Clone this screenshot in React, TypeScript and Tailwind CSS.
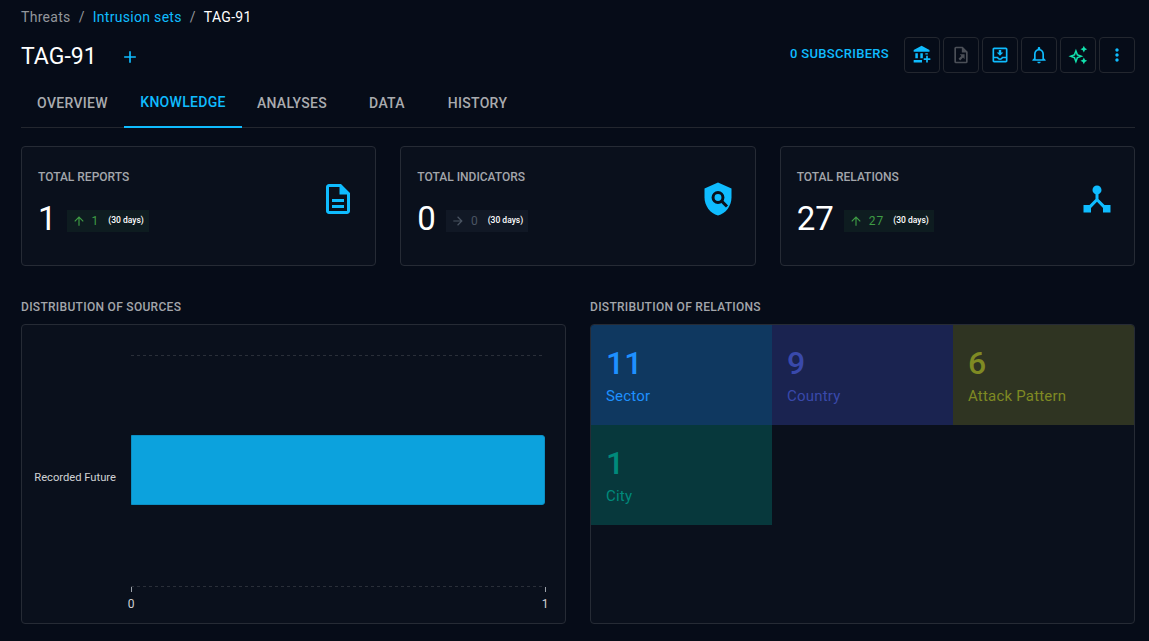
// Intrusion set knowledge page: header, tabs, metric cards and two distribution panels.
import type { ReactNode } from "react";
import {
  MdAdd,
  MdArrowForward,
  MdArrowUpward,
  MdDeviceHub,
  MdMoreVert,
  MdOutlineDescription,
  MdOutlineMoveToInbox,
  MdOutlineNotifications,
} from "react-icons/md";

const font = { fontFamily: "Roboto, 'Noto Sans', sans-serif" };

function BankPlusIcon() {
  return (
    <svg viewBox="0 0 24 24" className="h-5 w-5" fill="currentColor">
      <path d="M17 13h2v3h3v2h-3v3h-2v-3h-3v-2h3zM11.5 1 2 6v2h19V6zM4 10v6h3v-6zM10 10v6h3v-6zM16 10v1.5h3V10zM2 18v3h10.2a6 6 0 0 1-.2-1.5c0-.5.05-1 .15-1.5z" />
    </svg>
  );
}

function FileExportIcon() {
  return (
    <svg viewBox="0 0 24 24" className="h-5 w-5" fill="currentColor">
      <path d="M6 2a2 2 0 0 0-2 2v16a2 2 0 0 0 2 2h12a2 2 0 0 0 2-2V8l-6-6zm0 2h7v5h5v11H6zm3 12.5 3.4-3.4-1.9-1.9h5.8V17l-1.9-1.9-3.4 3.4z" />
    </svg>
  );
}

function StarsIcon() {
  return (
    <svg viewBox="0 0 24 24" className="h-5 w-5" fill="currentColor">
      <path
        fillRule="evenodd"
        d="M9.5 4.5 12 11l6.5 2.5L12 16l-2.5 6.5L7 16l-6.5-2.5L7 11zm0 5L8.5 12.5l-3 1 3 1 1 3 1-3 3-1-3-1z"
      />
      <path d="m19 1 1.3 2.7L23 5l-2.7 1.3L19 9l-1.3-2.7L15 5l2.7-1.3zM19 15l1.3 2.7L23 19l-2.7 1.3L19 23l-1.3-2.7L15 19l2.7-1.3z" />
    </svg>
  );
}

function ShieldSearchIcon() {
  return (
    <svg viewBox="0 0 24 24" className="h-9 w-9">
      <path fill="#0fbcff" d="M12 1 3 5v6c0 5.55 3.84 10.74 9 12 5.16-1.26 9-6.45 9-12V5z" />
      <circle cx="12" cy="11" r="3.3" fill="none" stroke="#0a101c" strokeWidth="2" />
      <path d="m14.6 13.6 3.4 3.4" stroke="#0a101c" strokeWidth="2" />
    </svg>
  );
}

function ActionButton({ className, children }: { className: string; children: ReactNode }) {
  return (
    <div
      className={`flex h-9 w-9 items-center justify-center rounded border border-[#23272f] ${className}`}
    >
      {children}
    </div>
  );
}

function MetricCard({
  title,
  value,
  delta,
  up,
  icon,
}: {
  title: string;
  value: string;
  delta: string;
  up: boolean;
  icon: ReactNode;
}) {
  return (
    <div className="flex h-[120px] flex-1 items-start justify-between rounded border border-[#262b35] bg-[#0a101c] pl-4 pr-[19px] pt-[23px]">
      <div>
        <div className="text-xs font-medium leading-[14px] text-[#a3a6ab]">{title}</div>
        <div className="mt-4 flex items-center gap-[10px]">
          <span className="text-[33px] leading-[38px] text-white">{value}</span>
          <span
            className={`mt-[3px] flex h-[22px] items-center pl-[5px] pr-[5px] ${
              up ? "bg-[#0e1c20] text-[#3f9d45]" : "bg-[#111825] text-[#4b5563]"
            }`}
          >
            {up ? <MdArrowUpward size={14} /> : <MdArrowForward size={14} />}
            <span className="ml-[6px] mr-[9px] text-xs tracking-[1px]">{delta}</span>
            <span className="text-[8.5px] font-medium text-white">(30 days)</span>
          </span>
        </div>
      </div>
      <div className="mt-[11px] text-[#0fbcff]">{icon}</div>
    </div>
  );
}

const tabs = [
  { label: "OVERVIEW", width: "w-[103px]" },
  { label: "KNOWLEDGE", width: "w-[118px]", active: true },
  { label: "ANALYSES", width: "w-[100px]" },
  { label: "DATA", width: "w-[90px]" },
  { label: "HISTORY", width: "w-[91px]" },
];

const treemap = [
  { n: "11", label: "Sector", bg: "bg-[#0f3860]", fg: "text-[#1e90ff]" },
  { n: "9", label: "Country", bg: "bg-[#1a2350]", fg: "text-[#3949ab]" },
  { n: "6", label: "Attack Pattern", bg: "bg-[#2f3422]", fg: "text-[#7f8a23]" },
  { n: "1", label: "City", bg: "bg-[#07383c]", fg: "text-[#00897b]" },
];

function SourcesChart() {
  return (
    <svg viewBox="0 0 543 298" className="block h-full w-full">
      <path d="M109 30.5H523M109 261.5H523" stroke="#2a2f39" strokeDasharray="3 3" />
      <path d="M109.5 262V267M523.5 262V267" stroke="#9aa0a8" />
      <path
        d="M109.5 110.5H520a2.5 2.5 0 0 1 2.5 2.5v64a2.5 2.5 0 0 1-2.5 2.5H109.5z"
        fill="#0ca2dd"
        stroke="#0b8fc4"
      />
      <text x="94" y="156" textAnchor="end" fontSize="11.2" fill="#d0d2d5">
        Recorded Future
      </text>
      <text x="109" y="283" textAnchor="middle" fontSize="12" fill="#d0d2d5">
        0
      </text>
      <text x="523" y="283" textAnchor="middle" fontSize="12" fill="#d0d2d5">
        1
      </text>
    </svg>
  );
}

export default function App() {
  return (
    <div
      className="h-[641px] overflow-hidden bg-[#060c18] pl-[21px] pr-[14px] pt-[9px]"
      style={font}
    >
      <div className="flex items-center text-sm leading-4 tracking-[0.3px] text-[#93969b]">
        <span>Threats</span>
        <span className="mx-[8px]">/</span>
        <span className="text-[#0fbcff]">Intrusion sets</span>
        <span className="mx-[8px]">/</span>
        <span className="text-white">TAG-91</span>
      </div>

      <div className="mt-[12px] flex h-9 items-center justify-between">
        <div className="mt-1 flex items-center">
          <h1 className="text-[23px] leading-7 text-white">TAG-91</h1>
          <MdAdd size={20} className="ml-[23px] text-[#0fbcff]" />
        </div>
        <div className="flex items-center">
          <span className="mr-[15px] mb-[3px] text-[13px] font-medium tracking-[0.3px] text-[#0fbcff]">
            0 SUBSCRIBERS
          </span>
          <div className="flex gap-[3px]">
            <ActionButton className="text-[#0fbcff]">
              <BankPlusIcon />
            </ActionButton>
            <ActionButton className="text-[#4b4f57]">
              <FileExportIcon />
            </ActionButton>
            <ActionButton className="text-[#0fbcff]">
              <MdOutlineMoveToInbox size={20} />
            </ActionButton>
            <ActionButton className="text-[#0fbcff]">
              <MdOutlineNotifications size={20} />
            </ActionButton>
            <ActionButton className="text-[#12e0ad]">
              <StarsIcon />
            </ActionButton>
            <ActionButton className="text-[#0fbcff]">
              <MdMoreVert size={20} />
            </ActionButton>
          </div>
        </div>
      </div>

      <div className="mt-[7px] flex h-[48px] border-b border-[#23272f]">
        {tabs.map((t) => (
          <div
            key={t.label}
            className={`flex items-center justify-center pb-[2px] text-sm font-medium tracking-[0.3px] ${t.width} ${
              t.active
                ? "-mb-px border-b-2 border-[#0fbcff] text-[#0fbcff]"
                : "text-[#a9abaf]"
            }`}
          >
            {t.label}
          </div>
        ))}
      </div>

      <div className="mt-[18px] flex gap-6">
        <MetricCard
          title="TOTAL REPORTS"
          value="1"
          delta="1"
          up
          icon={<MdOutlineDescription size={36} />}
        />
        <MetricCard
          title="TOTAL INDICATORS"
          value="0"
          delta="0"
          up={false}
          icon={<ShieldSearchIcon />}
        />
        <MetricCard
          title="TOTAL RELATIONS"
          value="27"
          delta="27"
          up
          icon={<MdDeviceHub size={36} />}
        />
      </div>

      <div className="mt-[34px] grid grid-cols-2 gap-6">
        <div>
          <h3 className="text-xs font-medium leading-[14px] tracking-[0.3px] text-[#a3a6ab]">
            DISTRIBUTION OF SOURCES
          </h3>
          <div className="mt-[10px] h-[300px] rounded border border-[#262b35] bg-[#0a101c]">
            <SourcesChart />
          </div>
        </div>
        <div>
          <h3 className="text-xs font-medium leading-[14px] tracking-[0.3px] text-[#a3a6ab]">
            DISTRIBUTION OF RELATIONS
          </h3>
          <div className="mt-[10px] h-[300px] overflow-hidden rounded border border-[#262b35] bg-[#0a101c]">
            <div className="grid auto-rows-[100px] grid-cols-3">
              {treemap.map((c) => (
                <div key={c.label} className={`pl-[15px] pt-[20px] ${c.bg} ${c.fg}`}>
                  <div className="text-[32px] font-medium leading-9">{c.n}</div>
                  <div className="mt-[6px] text-[15px] leading-[18px] tracking-[0.2px]">
                    {c.label}
                  </div>
                </div>
              ))}
            </div>
          </div>
        </div>
      </div>
    </div>
  );
}
